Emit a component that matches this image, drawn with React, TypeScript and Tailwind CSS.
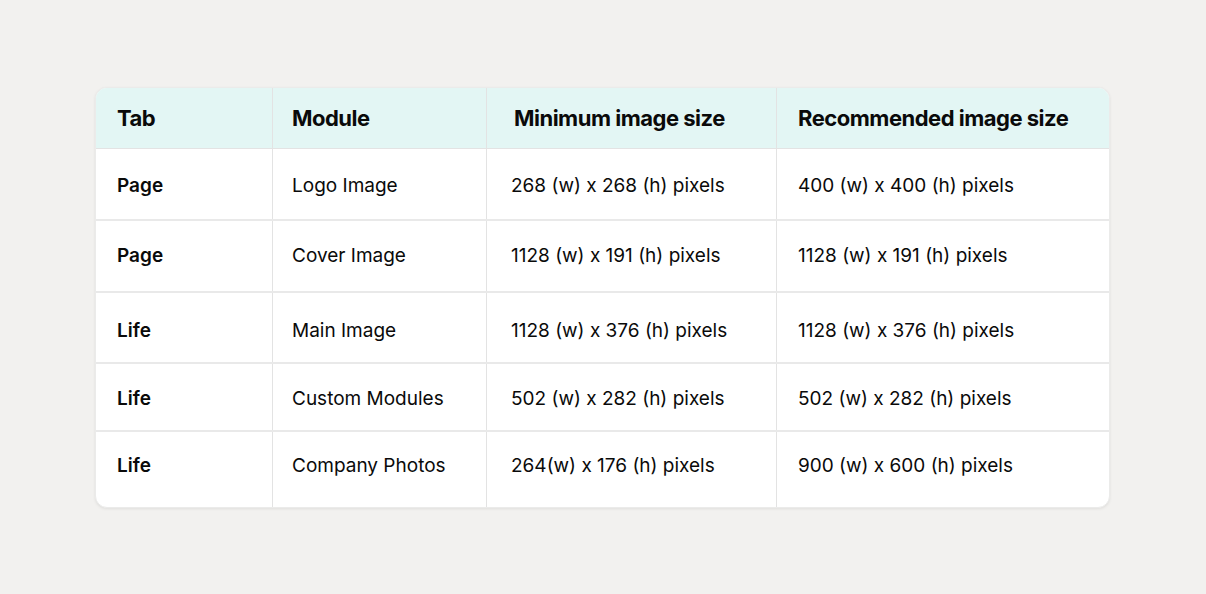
import React from "react";

const rows = [
  { tab: "Page", module: "Logo Image", min: "268 (w) x 268 (h) pixels", rec: "400 (w) x 400 (h) pixels", h: "h-[72px]", p: "pt-[4px]" },
  { tab: "Page", module: "Cover Image", min: "1128 (w) x 191 (h) pixels", rec: "1128 (w) x 191 (h) pixels", h: "h-[72px]", p: "pt-[0px]" },
  { tab: "Life", module: "Main Image", min: "1128 (w) x 376 (h) pixels", rec: "1128 (w) x 376 (h) pixels", h: "h-[71px]", p: "pt-[7px]" },
  { tab: "Life", module: "Custom Modules", min: "502 (w) x 282 (h) pixels", rec: "502 (w) x 282 (h) pixels", h: "h-[68px]", p: "pt-[5px]" },
  { tab: "Life", module: "Company Photos", min: "264(w) x 176 (h) pixels", rec: "900 (w) x 600 (h) pixels", h: "h-[75px]", p: "pb-[6px]" },
];

export default function App() {
  return (
    <div className="w-full h-[594px] bg-[#f2f1ef] pt-[87px] pl-[95px]" style={{ fontFamily: "Inter, 'Liberation Sans', sans-serif" }}>
      <div className="w-[1015px] rounded-[12px] bg-white overflow-hidden shadow-[0_1px_3px_rgba(0,0,0,0.08)] border border-[#ebebea] text-[#0a0a0a]">
        <div className="grid grid-cols-[177px_214px_290px_1fr] h-[61px] bg-[#e3f6f4] border-b border-[#e3e3e3] text-[22px] font-bold tracking-[-0.5px]">
          <div className="flex items-center pl-[21px] border-r border-[#e3e3e3]">Tab</div>
          <div className="flex items-center pl-[19px] border-r border-[#e3e3e3]">Module</div>
          <div className="flex items-center pl-[27px] border-r border-[#e3e3e3]">Minimum image size</div>
          <div className="flex items-center pl-[21px]">Recommended image size</div>
        </div>
        {rows.map((r, i) => (
          <div
            key={i}
            className={`grid grid-cols-[177px_214px_290px_1fr] ${r.h} text-[19px] ${i < rows.length - 1 ? "border-b-2 border-[#e9e9e9]" : ""}`}
          >
            <div className={`flex items-center ${r.p} pl-[21px] border-r border-[#e3e3e3] font-semibold`}>{r.tab}</div>
            <div className={`flex items-center ${r.p} pl-[19px] border-r border-[#e3e3e3]`}>{r.module}</div>
            <div className={`flex items-center ${r.p} pl-[24px] border-r border-[#e3e3e3]`}>{r.min}</div>
            <div className={`flex items-center ${r.p} pl-[21px]`}>{r.rec}</div>
          </div>
        ))}
      </div>
    </div>
  );
}
